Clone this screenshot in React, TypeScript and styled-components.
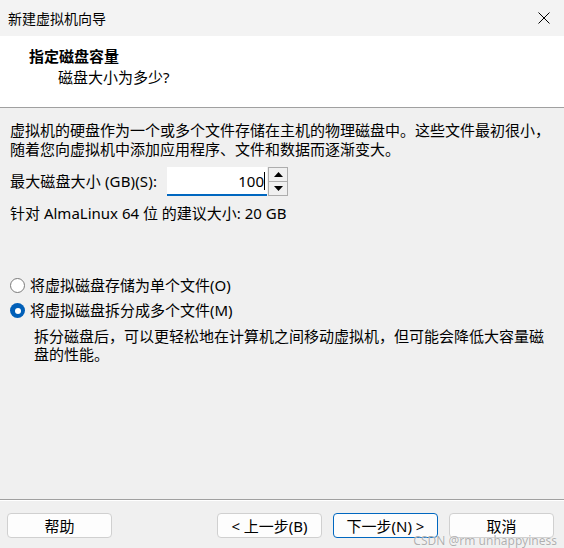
import React from "react";
import styled, { createGlobalStyle } from "styled-components";

const Global = createGlobalStyle`
  html, body { margin: 0; padding: 0; background: #f0f0f0; }
  body { font-family: "Noto Sans", "Noto Sans CJK SC", sans-serif; color: #000; }
  * { box-sizing: border-box; }
`;

const Window = styled.div`
  position: relative;
  width: 564px;
  height: 548px;
  display: flex;
  flex-direction: column;
  background: #f0f0f0;
  overflow: hidden;
`;

const TitleBar = styled.div`
  height: 36px;
  display: flex;
  align-items: center;
  justify-content: space-between;
  padding: 0 0 0 8px;
  background: #f3f3f3;
  font-size: 14px;
`;

const CloseBtn = styled.div`
  width: 40px;
  height: 36px;
  display: flex;
  align-items: center;
  justify-content: center;
`;

const Header = styled.div`
  height: 72px;
  background: #fff;
  border-bottom: 1px solid #a0a0a0;
  padding: 10px 0 0 29px;
  display: flex;
  flex-direction: column;
`;

const HeaderTitle = styled.div`
  font-size: 15px;
  font-weight: 700;
  line-height: 20px;
`;

const HeaderSub = styled.div`
  font-size: 15px;
  line-height: 20px;
  padding-left: 29px;
  margin-top: 1px;
`;

const Body = styled.div`
  flex: 1;
  padding: 13px 10px 0 10px;
  display: flex;
  flex-direction: column;
  font-size: 15px;
  border-bottom: 1px solid #a0a0a0;
`;

const Para = styled.div`
  line-height: 19px;
`;

const SizeRow = styled.div`
  display: flex;
  align-items: center;
  margin-top: 8px;
  height: 29px;
`;

const Label = styled.div`
  width: 157px;
  line-height: 19px;
  letter-spacing: 0.15px;
`;

const NumInput = styled.div`
  width: 100px;
  height: 29px;
  background: #fff;
  border-bottom: 2px solid #0067c0;
  display: flex;
  align-items: center;
  justify-content: flex-end;
  padding-right: 2px;
  font-size: 15px;
`;

const Caret = styled.span`
  display: inline-block;
  width: 1px;
  height: 18px;
  background: #000;
`;

const Spin = styled.div`
  width: 20px;
  height: 29px;
  margin-left: 1px;
  display: flex;
  flex-direction: column;
  border: 1px solid #adadad;
  background: #e8e8e8;
`;

const SpinHalf = styled.div<{ $top?: boolean }>`
  flex: 1;
  display: flex;
  align-items: center;
  justify-content: center;
  border-bottom: ${(p) => (p.$top ? "1px solid #adadad" : "none")};
  background: #f0f0f0;
`;

const Recommend = styled.div`
  margin-top: 8px;
  line-height: 19px;
`;

const RadioGroup = styled.div`
  margin-top: 53px;
  display: flex;
  flex-direction: column;
  gap: 6px;
`;

const RadioRow = styled.div`
  display: flex;
  align-items: center;
  gap: 5px;
  line-height: 19px;
`;

const RadioDot = styled.span<{ $checked?: boolean }>`
  flex: 0 0 15px;
  width: 15px;
  height: 15px;
  border-radius: 50%;
  display: inline-flex;
  align-items: center;
  justify-content: center;
  background: ${(p) => (p.$checked ? "#005fb8" : "#fff")};
  border: ${(p) => (p.$checked ? "none" : "1px solid #7a7a7a")};
  &::after {
    content: "";
    display: ${(p) => (p.$checked ? "block" : "none")};
    width: 6px;
    height: 6px;
    border-radius: 50%;
    background: #fff;
  }
`;

const Desc = styled.div`
  padding-left: 24px;
  margin-top: 7px;
  line-height: 18px;
  width: 540px;
`;

const Footer = styled.div`
  height: 48px;
  padding: 12px 10px 0 7px;
  display: flex;
  align-items: flex-start;
  border-top: 1px solid #ffffff;
`;

const Button = styled.button<{ $primary?: boolean }>`
  width: 105px;
  height: 25px;
  background: #fdfdfd;
  border: 1px solid ${(p) => (p.$primary ? "#0067c0" : "#d0d0d0")};
  border-radius: 4px;
  font-family: "Noto Sans", "Noto Sans CJK SC", sans-serif;
  font-size: 15px;
  line-height: 16px;
  padding: 0;
  color: #000;
`;

const Spacer = styled.div`
  flex: 1;
`;

const ButtonGroup = styled.div`
  display: flex;
  gap: 11px;
`;

const Watermark = styled.div`
  position: absolute;
  right: 7px;
  bottom: 1px;
  font-family: "Noto Sans", sans-serif;
  font-size: 12px;
  line-height: 13px;
  color: rgba(150, 150, 150, 0.75);
  text-shadow: 0 0 1px #fff;
  pointer-events: none;
`;

export default function App() {
  return (
    <Window>
      <Global />
      <TitleBar>
        <span>新建虚拟机向导</span>
        <CloseBtn>
          <svg width="12" height="12" viewBox="0 0 12 12">
            <path d="M0.5 0.5 L11.5 11.5 M11.5 0.5 L0.5 11.5" stroke="#000" strokeWidth="1" />
          </svg>
        </CloseBtn>
      </TitleBar>
      <Header>
        <HeaderTitle>指定磁盘容量</HeaderTitle>
        <HeaderSub>磁盘大小为多少?</HeaderSub>
      </Header>
      <Body>
        <Para>
          虚拟机的硬盘作为一个或多个文件存储在主机的物理磁盘中。这些文件最初很小，
          <br />
          随着您向虚拟机中添加应用程序、文件和数据而逐渐变大。
        </Para>
        <SizeRow>
          <Label>最大磁盘大小 (GB)(S):</Label>
          <NumInput>
            100
            <Caret />
          </NumInput>
          <Spin>
            <SpinHalf $top>
              <svg width="9" height="5" viewBox="0 0 9 5">
                <path d="M4.5 0 L9 5 L0 5 Z" fill="#000" />
              </svg>
            </SpinHalf>
            <SpinHalf>
              <svg width="9" height="5" viewBox="0 0 9 5">
                <path d="M0 0 L9 0 L4.5 5 Z" fill="#000" />
              </svg>
            </SpinHalf>
          </Spin>
        </SizeRow>
        <Recommend>针对 AlmaLinux 64 位 的建议大小: 20 GB</Recommend>
        <RadioGroup>
          <RadioRow>
            <RadioDot />
            <span>将虚拟磁盘存储为单个文件(O)</span>
          </RadioRow>
          <RadioRow>
            <RadioDot $checked />
            <span>将虚拟磁盘拆分成多个文件(M)</span>
          </RadioRow>
        </RadioGroup>
        <Desc>
          拆分磁盘后，可以更轻松地在计算机之间移动虚拟机，但可能会降低大容量磁盘的性能。
        </Desc>
      </Body>
      <Footer>
        <Button>帮助</Button>
        <Spacer />
        <ButtonGroup>
          <Button>&lt; 上一步(B)</Button>
          <Button $primary>下一步(N) &gt;</Button>
          <Button>取消</Button>
        </ButtonGroup>
      </Footer>
      <Watermark>CSDN @rm unhappyiness</Watermark>
    </Window>
  );
}
